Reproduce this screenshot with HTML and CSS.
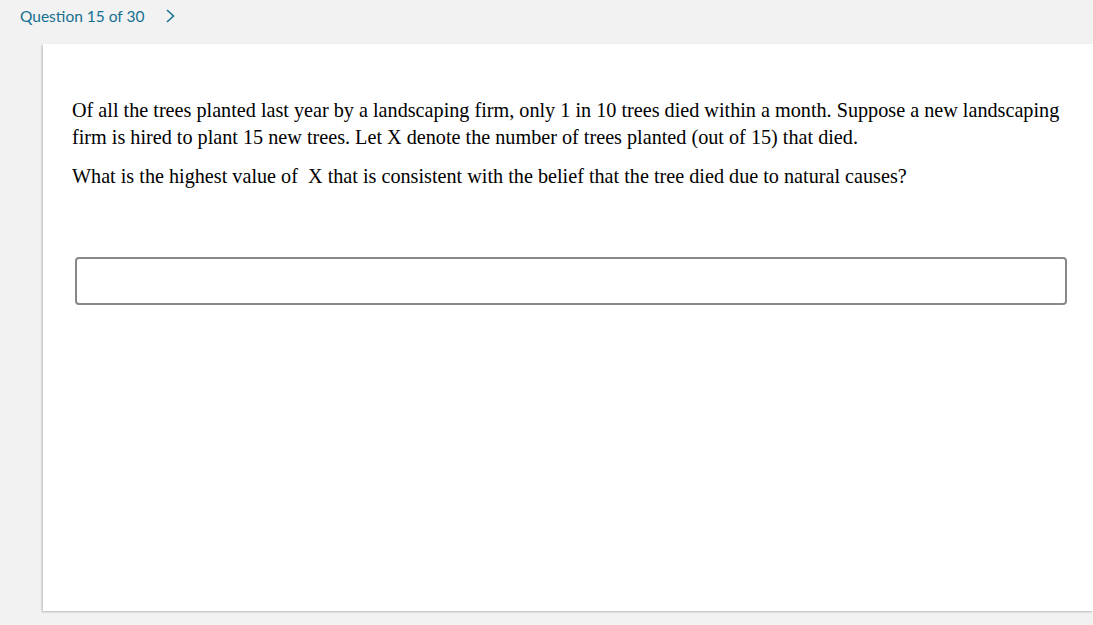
FILE: index.html
```html
<!DOCTYPE html>
<html>
<head>
<meta charset="utf-8">
<link rel="stylesheet" href="styles.css">
</head>
<body>
<div class="page">
  <header class="topbar">
    <span class="qnum">Question 15 of 30</span>
    <svg class="chev" width="12" height="16" viewBox="0 0 12 16"><path d="M3 2 L9.5 8 L3 14" fill="none" stroke="#1a7391" stroke-width="1.6"/></svg>
  </header>
  <main class="card">
    <p class="para">Of all the trees planted last year by a landscaping firm, only 1 in 10 trees died within a month. Suppose a new landscaping firm is hired to plant 15 new trees. Let X denote the number of trees planted (out of 15) that died.</p>
    <p class="para q">What is the highest value of&nbsp; X that is consistent with the belief that the tree died due to natural causes?</p>
    <div class="answer"></div>
  </main>
</div>
</body>
</html>
```
FILE: styles.css
```css
html, body {
  margin: 0;
  padding: 0;
  background: #f2f2f2;
  overflow: hidden;
}
.page {
  width: 1093px;
  height: 625px;
}
.topbar {
  height: 44px;
  display: flex;
  align-items: flex-start;
  padding: 6px 0 0 20px;
  box-sizing: border-box;
  gap: 20px;
}
.qnum {
  font-family: Lato, "Open Sans", sans-serif;
  font-size: 15.5px;
  color: #15708f;
  line-height: 20px;
}
.chev {
  margin-top: 2px;
}
.card {
  margin-left: 43px;
  height: 567px;
  background: #fff;
  box-shadow: -1px 1px 2px rgba(0,0,0,0.25);
  padding: 53px 0 0 29px;
  box-sizing: border-box;
  font-family: "Liberation Serif", "Times New Roman", serif;
  font-size: 20.2px;
  color: #000;
}
.para {
  margin: 0 30px 0 0;
  line-height: 27px;
}
.q {
  margin-top: 12px;
}
.answer {
  margin: 67px 0 0 3px;
  width: 992px;
  height: 48px;
  box-sizing: border-box;
  border: 2px solid #888;
  border-radius: 4px;
}
```
